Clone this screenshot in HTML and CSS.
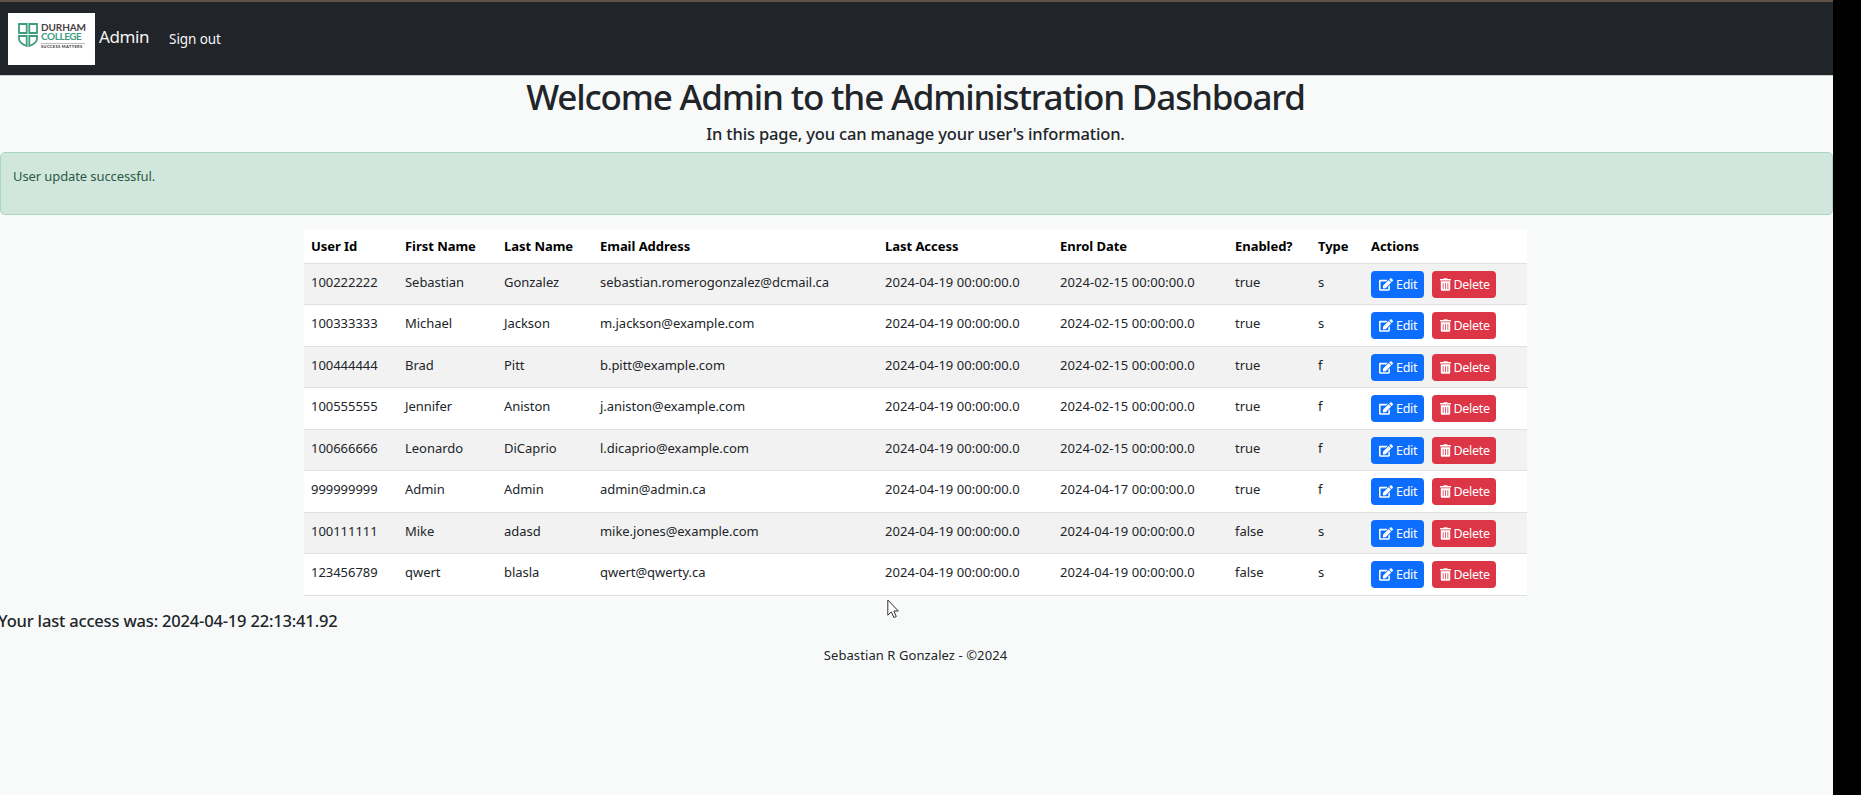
FILE: index.html
```
<!DOCTYPE html>
<html lang="en">
<head>
<meta charset="utf-8">
<title>Administration Dashboard</title>
<link rel="stylesheet" href="styles.css">
</head>
<body>
<svg class="defs" width="0" height="0">
  <symbol id="pen" viewBox="0 0 576 512"><path d="M402.6 83.2l90.2 90.2c3.8 3.8 3.8 10 0 13.800L274.400 405.600l-92.800 10.300c-12.400 1.400-22.900-9.100-21.500-21.500l10.300-92.800L388.800 83.200c3.800-3.800 10-3.800 13.800 0zm162-22.900l-48.800-48.800c-15.200-15.200-39.900-15.200-55.200 0l-35.400 35.400c-3.800 3.800-3.800 10 0 13.800l90.200 90.200c3.800 3.800 10 3.800 13.800 0l35.400-35.400c15.200-15.300 15.200-40 0-55.200zM384 346.200V448H64V128h229.800c3.200 0 6.200-1.300 8.500-3.500l40-40c7.600-7.600 2.200-20.500-8.500-20.500H48C21.500 64 0 85.500 0 112v352c0 26.500 21.500 48 48 48h352c26.500 0 48-21.500 48-48V306.200c0-10.700-12.900-16-20.500-8.500l-40 40c-2.200 2.300-3.500 5.300-3.500 8.500z"/></symbol>
  <symbol id="bin" viewBox="0 0 448 512"><path fill-rule="evenodd" d="M32 464a48 48 0 0 0 48 48h288a48 48 0 0 0 48-48V128H32zm272-256a16 16 0 0 1 32 0v224a16 16 0 0 1-32 0zm-96 0a16 16 0 0 1 32 0v224a16 16 0 0 1-32 0zm-96 0a16 16 0 0 1 32 0v224a16 16 0 0 1-32 0zM432 32H312l-9.400-18.700A24 24 0 0 0 281.100 0H166.800a23.700 23.700 0 0 0-21.400 13.300L136 32H16A16 16 0 0 0 0 48v32a16 16 0 0 0 16 16h416a16 16 0 0 0 16-16V48a16 16 0 0 0-16-16z"/></symbol>
</svg>
<div class="page">
  <nav class="navbar">
    <div class="logo">
      <svg class="shield" viewBox="0 0 20 25" width="20" height="25"><path d="M1 1h7.700v9H1zM11.300 1H19v9h-7.700zM1 13h7.700v10C4.500 21.500 1 19.500 1 15.500zM19 13h-7.700v10c4.200-1.500 7.700-3.500 7.700-7.500z" fill="none" stroke="#3f9c7e" stroke-width="1.800"/></svg>
      <div class="logo-words">
        <span class="durham">DURHAM</span>
        <span class="college">COLLEGE</span>
        <span class="motto">SUCCESS MATTERS</span>
      </div>
    </div>
    <a class="brand">Admin</a>
    <a class="signout">Sign out</a>
  </nav>
  <h1 class="title">Welcome Admin to the Administration Dashboard</h1>
  <h5 class="subtitle">In this page, you can manage your user's information.</h5>
  <div class="alert">User update successful.</div>
  <table class="users">
    <colgroup><col class="c-id"><col class="c-first"><col class="c-last"><col class="c-email"><col class="c-date"><col class="c-date"><col class="c-enabled"><col class="c-type"><col class="c-actions"></colgroup>
    <thead><tr><th>User Id</th><th>First Name</th><th>Last Name</th><th>Email Address</th><th>Last Access</th><th>Enrol Date</th><th>Enabled?</th><th>Type</th><th>Actions</th></tr></thead>
    <tbody id="rows"></tbody>
  </table>
  <h5 class="last-access">Your last access was: 2024-04-19 22:13:41.92</h5>
  <footer class="footer">Sebastian R Gonzalez - ©2024</footer>
  <svg class="cursor" viewBox="0 0 12 20" width="12" height="20"><path d="M.8 1v15.200l3.500-3.300 2.600 5.600 2.400-1-2.500-5.500h4.500z" fill="#fff" stroke="#333" stroke-width="1"/></svg>
</div>
<script src="users.js"></script>
</body>
</html>
```
FILE: styles.css
```
* { box-sizing: border-box; }
body {
  margin: 0;
  background: #000;
  color: #212529;
  font: 13px/20px "Noto Sans", "Open Sans", sans-serif;
}
.defs { position: absolute; }
.page {
  position: relative;
  width: 1833px;
  height: 795px;
  overflow: hidden;
  background: #f8fafa;
  border-top: 2px solid #5f5445;
}
.navbar {
  display: flex;
  align-items: center;
  height: 74px;
  padding-left: 8px;
  background: #212529;
  border-bottom: 1px solid #c9cccd;
  color: #f4f5f5;
}
.logo {
  display: flex;
  width: 87px;
  height: 52px;
  padding: 10px 0 0 10px;
  background: #fff;
  gap: 3px;
}
.logo-words {
  display: flex;
  flex-direction: column;
  width: 44px;
  font-family: Lato, sans-serif;
  white-space: nowrap;
}
.durham, .college { font-size: 10px; line-height: 9px; font-weight: 700; }
.durham { color: #4a4044; letter-spacing: -.1px; }
.college { color: #3f9c7e; letter-spacing: -.45px; }
.motto {
  margin-top: 2px;
  border-top: 1px solid #bbb;
  color: #4a4044;
  font-size: 4px;
  font-weight: 900;
  line-height: 6px;
  letter-spacing: .35px;
}
.brand { margin: -3px 0 0 4px; font-size: 17px; line-height: 24px; letter-spacing: -.4px; }
.signout { margin: 1px 0 0 20px; font-size: 13.500px; letter-spacing: -.1px; }
.title {
  margin: 0 2px 0 0;
  text-align: center;
  font-size: 35px;
  font-weight: 500;
  line-height: 42px;
  letter-spacing: -1.170px;
}
.subtitle {
  margin: 6px 2px 0 0;
  text-align: center;
  font-size: 16.500px;
  font-weight: 500;
  line-height: 20px;
  letter-spacing: -.155px;
}
.alert {
  height: 63px;
  margin-top: 8px;
  padding: 13px 12px;
  background: #d1e7dd;
  border: 1px solid #a9d5c3;
  border-radius: 5px;
  color: #2b5a45;
  letter-spacing: -.1px;
}
.users {
  width: 1223px;
  margin: 14px 0 0 304px;
  table-layout: fixed;
  border-collapse: separate;
  border-spacing: 0;
  background: #fff;
}
.c-id { width: 94px; }
.c-first { width: 99px; }
.c-last { width: 96px; }
.c-email { width: 285px; }
.c-date { width: 175px; }
.c-enabled { width: 83px; }
.c-type { width: 53px; }
.c-actions { width: 163px; }
.users th, .users td {
  padding: 8px 0 0 7px;
  border-bottom: 1px solid #dee0e1;
  text-align: left;
  vertical-align: top;
  white-space: nowrap;
}
.users th { height: 35px; padding-top: 7px; color: #000; font-weight: 700; letter-spacing: -.04px; }
.users td { height: 42px; letter-spacing: -.04px; }
.users td.date { letter-spacing: .05px; }
.users tr:nth-child(odd) td { height: 41px; background: #f2f2f2; }
.users td.actions { padding-top: 7px; }
.buttons { display: flex; gap: 8px; }
.btn {
  display: flex;
  align-items: center;
  height: 27px;
  gap: 3px;
  border-radius: 4px;
  padding-left: 8px;
  color: #fff;
  font-size: 12.500px;
  line-height: 20px;
  letter-spacing: -.3px;
}
.btn svg { height: 13px; fill: #fff; }
.edit { width: 52.500px; background: #0d6efd; }
.edit svg { width: 14px; }
.delete { width: 64px; background: #dc3545; }
.delete svg { width: 11px; }
.last-access {
  margin: 15px 0 0 -2px;
  font-size: 16.500px;
  font-weight: 500;
  line-height: 20px;
  letter-spacing: -.180px;
}
.footer { margin: 14px 2px 0 0; text-align: center; letter-spacing: .08px; }
.cursor { position: absolute; left: 887px; top: 597px; }
```
FILE: users.js
```
const users = [
  ["100222222", "Sebastian", "Gonzalez", "sebastian.romerogonzalez@dcmail.ca", "2024-04-19", "2024-02-15", "true", "s"],
  ["100333333", "Michael", "Jackson", "m.jackson@example.com", "2024-04-19", "2024-02-15", "true", "s"],
  ["100444444", "Brad", "Pitt", "b.pitt@example.com", "2024-04-19", "2024-02-15", "true", "f"],
  ["100555555", "Jennifer", "Aniston", "j.aniston@example.com", "2024-04-19", "2024-02-15", "true", "f"],
  ["100666666", "Leonardo", "DiCaprio", "l.dicaprio@example.com", "2024-04-19", "2024-02-15", "true", "f"],
  ["999999999", "Admin", "Admin", "admin@admin.ca", "2024-04-19", "2024-04-17", "true", "f"],
  ["100111111", "Mike", "adasd", "mike.jones@example.com", "2024-04-19", "2024-04-19", "false", "s"],
  ["123456789", "qwert", "blasla", "qwert@qwerty.ca", "2024-04-19", "2024-04-19", "false", "s"]
];
document.getElementById("rows").innerHTML = users.map(u => {
  const cells = u.map((v, i) => i === 4 || i === 5 ? `<td class="date">${v} 00:00:00.0</td>` : `<td>${v}</td>`).join("");
  return `<tr>${cells}<td class="actions"><div class="buttons"><a class="btn edit"><svg><use href="#pen"/></svg>Edit</a><a class="btn delete"><svg><use href="#bin"/></svg>Delete</a></div></td></tr>`;
}).join("");
```
